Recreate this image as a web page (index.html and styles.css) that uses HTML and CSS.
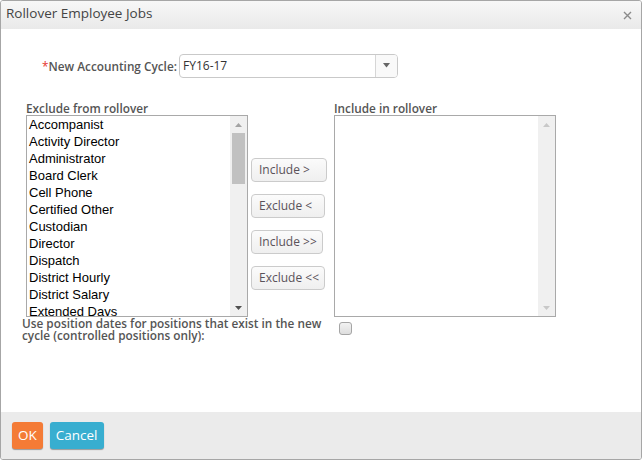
FILE: index.html
```html
<!DOCTYPE html>
<html>
<head>
<meta charset="utf-8">
<title>Rollover Employee Jobs</title>
<link rel="stylesheet" href="styles.css">
</head>
<body>
<div class="dialog">
  <div class="dlg-header">
    <span class="dlg-title">Rollover Employee Jobs</span>
    <span class="dlg-close"><svg width="9" height="9" viewBox="0 0 9 9"><path d="M1 1 L8 8 M8 1 L1 8" stroke="#8a8a8a" stroke-width="1.4" fill="none"/></svg></span>
  </div>
  <div class="dlg-body">
    <div class="cycle-row">
      <label class="field-label"><span class="req">*</span>New Accounting Cycle:</label>
      <div class="select">
        <span class="select-value">FY16-17</span>
        <span class="select-arrow"><svg width="7" height="5" viewBox="0 0 7 5"><path d="M0 0 H7 L3.5 4.5 Z" fill="#666"/></svg></span>
      </div>
    </div>
    <div class="transfer">
      <div class="list-label">Exclude from rollover</div>
      <div></div>
      <div class="list-label">Include in rollover</div>
      <div class="listbox">
        <div class="items">
          <div class="item">Accompanist</div>
          <div class="item">Activity Director</div>
          <div class="item">Administrator</div>
          <div class="item">Board Clerk</div>
          <div class="item">Cell Phone</div>
          <div class="item">Certified Other</div>
          <div class="item">Custodian</div>
          <div class="item">Director</div>
          <div class="item">Dispatch</div>
          <div class="item">District Hourly</div>
          <div class="item">District Salary</div>
          <div class="item">Extended Days</div>
        </div>
        <div class="scrollbar">
          <div class="sb-arrow"><svg width="7" height="4" viewBox="0 0 7 4"><path d="M3.5 0 L7 4 H0 Z" fill="#a3a3a3"/></svg></div>
          <div class="sb-thumb"></div>
          <div class="sb-track"></div>
          <div class="sb-arrow"><svg width="7" height="4" viewBox="0 0 7 4"><path d="M0 0 H7 L3.5 4 Z" fill="#505050"/></svg></div>
        </div>
      </div>
      <div class="actions">
        <button class="act-btn w76">Include &gt;</button>
        <button class="act-btn w74">Exclude &lt;</button>
        <button class="act-btn w72">Include &gt;&gt;</button>
        <button class="act-btn w74">Exclude &lt;&lt;</button>
      </div>
      <div class="listbox">
        <div class="items"></div>
        <div class="scrollbar">
          <div class="sb-arrow"><svg width="7" height="4" viewBox="0 0 7 4"><path d="M3.5 0 L7 4 H0 Z" fill="#c8c8c8"/></svg></div>
          <div class="sb-track"></div>
          <div class="sb-arrow"><svg width="7" height="4" viewBox="0 0 7 4"><path d="M0 0 H7 L3.5 4 Z" fill="#c8c8c8"/></svg></div>
        </div>
      </div>
    </div>
    <div class="option-row">
      <label class="option-label" for="usedates">Use position dates for positions that exist in the new<br>cycle (controlled positions only):</label>
      <span class="checkbox" id="usedates"></span>
    </div>
  </div>
  <div class="dlg-footer">
    <button class="ft-btn ok">OK</button>
    <button class="ft-btn cancel">Cancel</button>
  </div>
</div>
</body>
</html>
```

FILE: styles.css
```css
* { box-sizing: border-box; }
html, body { margin: 0; padding: 0; background: #fff; }
body { font-family: "Open Sans", "Liberation Sans", sans-serif; }

.dialog {
  width: 642px;
  height: 460px;
  border: 1px solid #a6a6a6;
  border-radius: 3px;
  display: flex;
  flex-direction: column;
  overflow: hidden;
  background: #fff;
}

.dlg-header {
  height: 28px;
  flex: none;
  display: flex;
  align-items: flex-start;
  justify-content: space-between;
  padding: 0 9px 0 5px;
  background: linear-gradient(#f7f7f7, #e9e9e9);
}
.dlg-title {
  font-size: 13.5px;
  line-height: 24px;
  color: #444;
}
.dlg-close {
  display: flex;
  margin-top: 10px;
}

.dlg-body {
  flex: 1;
  display: flex;
  flex-direction: column;
}

.cycle-row {
  display: flex;
  align-items: center;
  margin-top: 25px;
  padding-left: 41px;
}
.field-label {
  width: 137px;
  flex: none;
  padding-right: 3px;
  text-align: right;
  white-space: nowrap;
  font-size: 11.8px;
  font-weight: 600;
  color: #555;
}
.req { color: #e5352f; font-weight: 400; }
.select {
  width: 219px;
  height: 24px;
  border: 1px solid #c9c9c9;
  border-radius: 4px;
  display: flex;
  align-items: stretch;
  background: #fff;
}
.select-value {
  flex: 1;
  padding-left: 3px;
  font-size: 12px;
  line-height: 22px;
  color: #333;
}
.select-arrow {
  width: 22px;
  border-left: 1px solid #d6d6d6;
  display: flex;
  align-items: center;
  justify-content: center;
  padding-bottom: 1px;
  background: #f9f9f9;
  border-radius: 0 3px 3px 0;
}

.transfer {
  display: grid;
  grid-template-columns: 222px 86px 222px;
  grid-template-rows: 14px 202px;
  margin-top: 23px;
  padding-left: 25px;
}
.list-label {
  font-size: 11.8px;
  font-weight: 600;
  line-height: 14px;
  color: #555;
  white-space: nowrap;
}

.listbox {
  border: 1px solid #a9a9a9;
  display: flex;
  overflow: hidden;
  background: #fff;
}
.items {
  flex: 1;
  padding-left: 2px;
  overflow: hidden;
}
.item {
  font-family: "Liberation Sans", Arial, sans-serif;
  font-size: 13px;
  line-height: 17px;
  height: 17px;
  color: #000;
  white-space: nowrap;
}
.scrollbar {
  width: 17px;
  flex: none;
  display: flex;
  flex-direction: column;
  background: #f0f0f0;
}
.sb-arrow {
  height: 17px;
  display: flex;
  align-items: center;
  justify-content: center;
}
.sb-thumb {
  height: 51px;
  margin: 0 2px;
  background: #c1c1c1;
}
.sb-track { flex: 1; }

.actions {
  display: flex;
  flex-direction: column;
  align-items: flex-start;
  gap: 12px;
  padding-top: 43px;
  padding-left: 3px;
}
.act-btn {
  height: 24px;
  padding: 0 0 0 7px;
  text-align: left;
  border: 1px solid #cbcbcb;
  border-radius: 4px;
  background: linear-gradient(#fbfbfb, #efefef);
  font-family: "Open Sans", "Liberation Sans", sans-serif;
  font-size: 12px;
  color: #5a525a;
  line-height: 20px;
}
.w76 { width: 76px; }
.w74 { width: 74px; }
.w72 { width: 72px; }

.option-row {
  display: flex;
  align-items: flex-start;
  padding-left: 21px;
}
.option-label {
  width: 317px;
  flex: none;
  font-size: 11.8px;
  font-weight: 600;
  line-height: 12px;
  color: #555;
  white-space: nowrap;
}
.checkbox {
  width: 13px;
  height: 13px;
  margin-top: 5px;
  border: 1px solid #a5a5a5;
  border-radius: 3px;
  background: linear-gradient(#f2f2f2, #dedede);
}

.dlg-footer {
  height: 47px;
  flex: none;
  background: #ebebeb;
  display: flex;
  align-items: flex-start;
  gap: 7px;
  padding: 10px 0 0 11px;
}
.ft-btn {
  height: 27px;
  padding: 0 6px;
  border: none;
  border-radius: 3px;
  font-family: "Open Sans", "Liberation Sans", sans-serif;
  font-size: 13.5px;
  line-height: 27px;
  color: #fff;
  box-shadow: 0 1px 1px rgba(0,0,0,0.35);
}
.ok { background: #f47b36; }
.cancel { background: #38aed0; }
```
